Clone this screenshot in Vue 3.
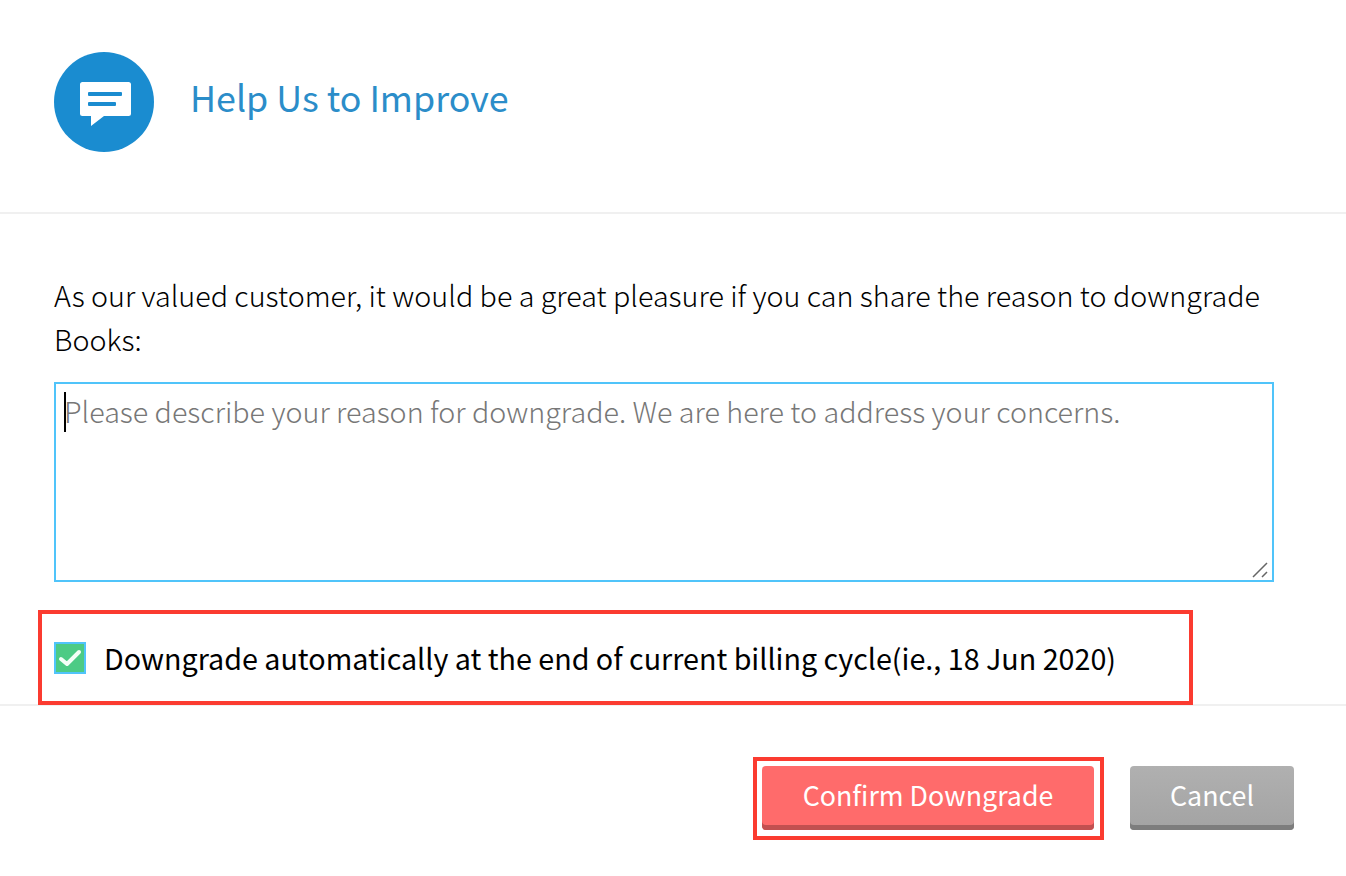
<script setup>
import { ref } from 'vue'

const reason = ref('')
const autoDowngrade = ref(true)
</script>

<template>
  <div class="dialog">
    <header class="dlg-head">
      <div class="dlg-icon">
        <svg width="100" height="100" viewBox="0 0 100 100" aria-hidden="true">
          <path
            d="M28.5 30h46a2.5 2.5 0 0 1 2.500 2.500v29a2.500 2.500 0 0 1-2.500 2.500H50L37 74V64h-8.500a2.500 2.500 0 0 1-2.500-2.500v-29a2.500 2.500 0 0 1 2.500-2.500z"
            fill="#fff"
          />
          <rect x="34" y="40" width="34" height="4" rx="1" fill="#1a8cd0" />
          <rect x="34" y="50" width="28" height="4" rx="1" fill="#1a8cd0" />
        </svg>
      </div>
      <h1 class="dlg-title">Help Us to Improve</h1>
    </header>

    <section class="dlg-body">
      <p class="dlg-msg">
        As our valued customer, it would be a great pleasure if you can share the reason to downgrade Books:
      </p>
      <div class="reason-wrap">
        <textarea
          v-model="reason"
          class="reason"
          placeholder="Please describe your reason for downgrade. We are here to address your concerns."
        ></textarea>
        <span class="caret"></span>
        
        <svg class="grip" width="18" height="18" viewBox="0 0 18 18" aria-hidden="true">
          <path d="M1 16L15 2M10 16l5-5" fill="none" stroke="#666" stroke-width="1.500" />
        </svg>
      </div>
      <label class="auto-row">
        <input v-model="autoDowngrade" class="auto-input" type="checkbox" />
        <span class="auto-box">
          <svg v-if="autoDowngrade" width="24" height="18" viewBox="0 0 24 18" aria-hidden="true">
            <path
              d="M3 10l6 5L21 3"
              fill="none"
              stroke="#f4fff8"
              stroke-width="4"
              stroke-linecap="round"
              stroke-linejoin="round"
            />
          </svg>
        </span>
        <span class="auto-text">Downgrade automatically at the end of current billing cycle(ie., 18 Jun 2020)</span>
      </label>
    </section>

    <footer class="dlg-foot">
      <div class="confirm-mark">
        <button class="btn btn-confirm" type="button">Confirm Downgrade</button>
      </div>
      <button class="btn btn-cancel" type="button">Cancel</button>
    </footer>
  </div>
</template>

<style>
html,
body {
  background: #fff;
}
</style>

<style scoped>
.dialog {
  width: 1346px;
  height: 876px;
  font-family: "Noto Sans CJK SC", "Lato", sans-serif;
  color: #000;
  background: #fff;
  overflow: hidden;
}

.dlg-head {
  display: flex;
  align-items: center;
  gap: 36px;
  height: 214px;
  box-sizing: border-box;
  padding: 0 54px 8px;
  border-bottom: 2px solid #f0f0f0;
}

.dlg-icon {
  width: 100px;
  height: 100px;
  border-radius: 50%;
  background: #1a8cd0;
  flex-shrink: 0;
}

.dlg-icon svg {
  display: block;
}

.dlg-title {
  margin: 0 0 12px;
  font-size: 35.800px;
  line-height: 48px;
  font-weight: 400;
  color: #2b8dc9;
}

.dlg-body {
  padding: 59px 54px 0;
  height: 490px;
  box-sizing: border-box;
}

.dlg-msg {
  margin: 0;
  width: 1220px;
  font-size: 28.700px;
  line-height: 44px;
  font-weight: 300;
}

.reason-wrap {
  position: relative;
  margin-top: 21px;
  width: 1220px;
  height: 200px;
}

.reason {
  display: block;
  width: 100%;
  height: 100%;
  box-sizing: border-box;
  padding: 7px 8px;
  border: 2px solid #50c4fa;
  border-radius: 0;
  outline: none;
  resize: none;
  font-family: inherit;
  font-size: 28.700px;
  font-weight: 300;
  line-height: 40px;
  color: #111;
}

.reason::placeholder {
  color: #777;
  opacity: 1;
}

.caret {
  position: absolute;
  left: 10px;
  top: 10px;
  width: 2px;
  height: 40px;
  background: #000;
}

.grip {
  position: absolute;
  right: 4px;
  bottom: 3px;
  pointer-events: none;
}

.auto-row {
  position: relative;
  z-index: 1;
  display: flex;
  align-items: center;
  gap: 18px;
  width: 1155px;
  height: 95px;
  box-sizing: border-box;
  margin: 28px 0 0 -16px;
  padding-left: 12px;
  border: 4px solid #fb3b30;
  cursor: pointer;
}

.auto-input {
  display: none;
}

.auto-box {
  width: 32px;
  height: 32px;
  box-sizing: border-box;
  border: 2px solid #50c4fa;
  background: #4ccb85;
  display: flex;
  align-items: center;
  justify-content: center;
  flex-shrink: 0;
}

.auto-text {
  font-size: 28.700px;
  line-height: 40px;
  color: #000;
}

.dlg-foot {
  display: flex;
  justify-content: flex-end;
  align-items: flex-start;
  gap: 26px;
  border-top: 2px solid #f0f0f0;
  padding: 51px 52px 0 0;
}

.confirm-mark {
  padding: 5px 6px 6px 5px;
  border: 4px solid #fb3b30;
}

.btn {
  display: block;
  height: 64px;
  border: none;
  border-radius: 4px;
  padding: 0 0 8px;
  font-family: inherit;
  font-size: 26.800px;
  font-weight: 400;
  color: #fff;
  cursor: pointer;
}

.btn-confirm {
  width: 332px;
  background: #ff6b6b;
  box-shadow: inset 0 -5px 0 #c25050;
}

.btn-cancel {
  width: 164px;
  background: linear-gradient(#b0b0b0, #a3a3a3);
  box-shadow: inset 0 -5px 0 #7d7d7d;
  margin-top: 9px;
}
</style>
